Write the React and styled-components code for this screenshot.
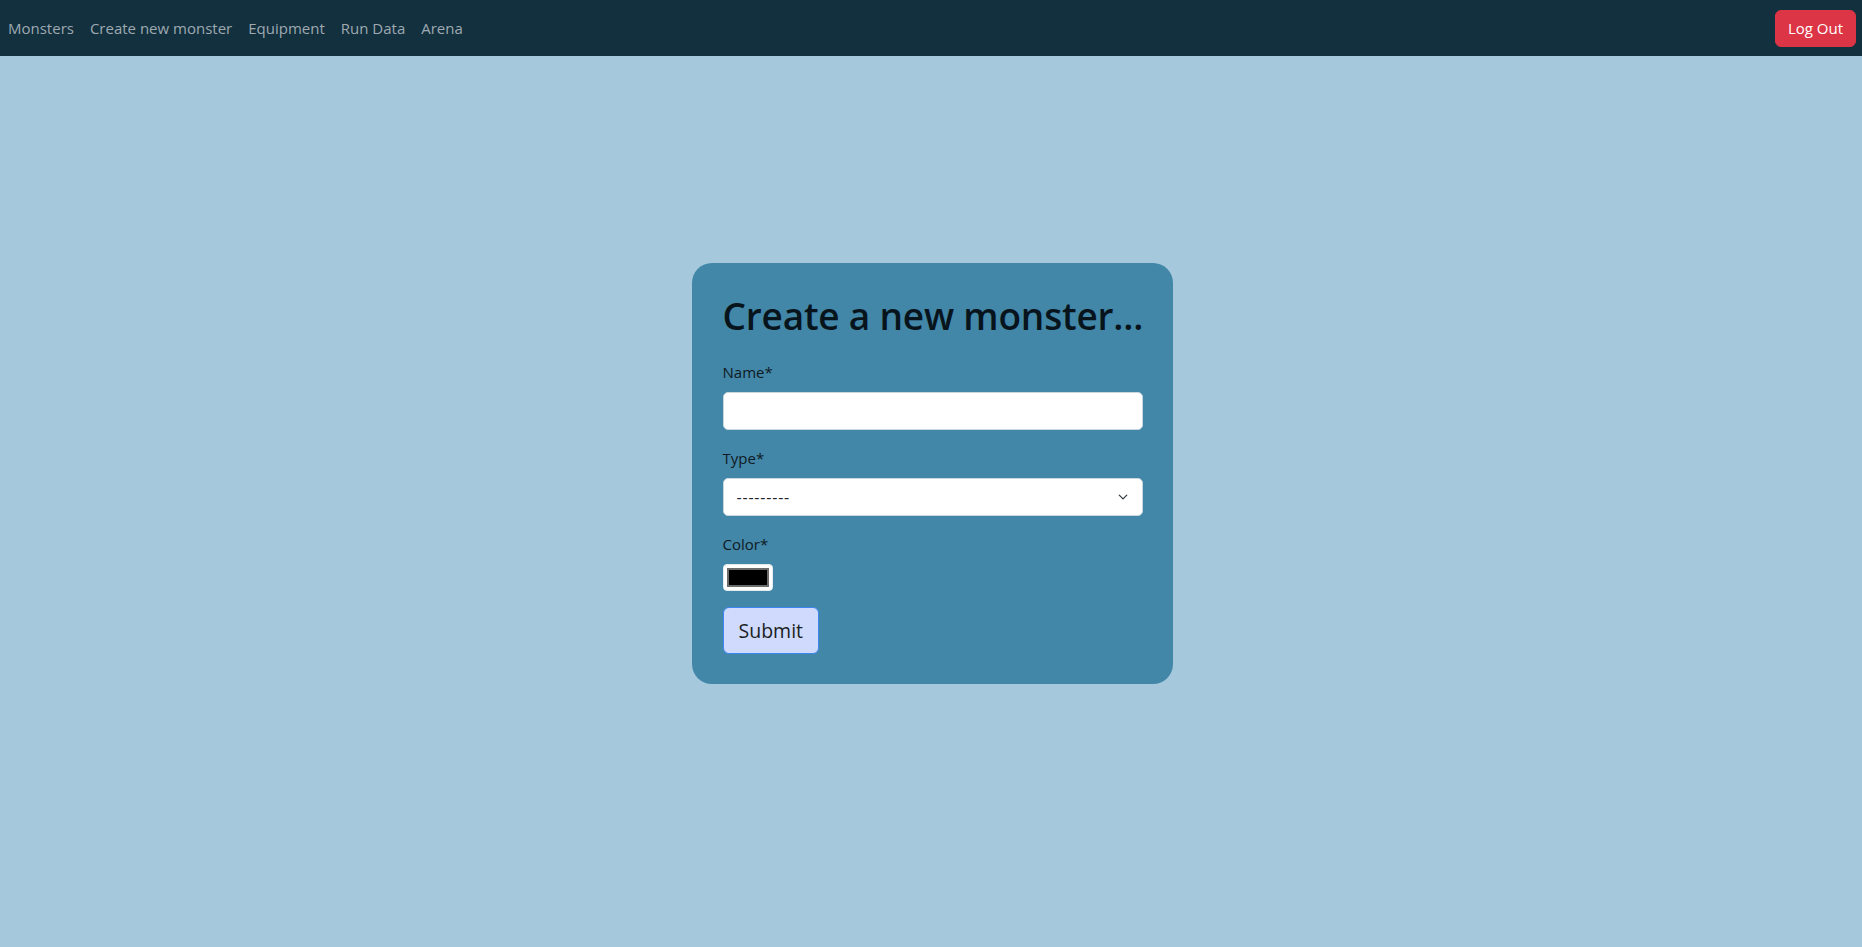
import React from "react";
import styled, { createGlobalStyle } from "styled-components";

const GlobalStyle = createGlobalStyle`
  * {
    box-sizing: border-box;
  }
  html, body {
    margin: 0;
    padding: 0;
    background-color: #a6c8dc;
    font-family: "Open Sans", "Noto Sans", sans-serif;
    color: #212529;
  }
`;

const links = ["Monsters", "Create new monster", "Equipment", "Run Data", "Arena"];

const App = () => {
  return (
    <>
      <GlobalStyle />
      <Navbar>
        <NavLinks>
          {links.map((l) => (
            <NavLink href="#" key={l}>
              {l}
            </NavLink>
          ))}
        </NavLinks>
        <LogoutButton>Log Out</LogoutButton>
      </Navbar>
      <Main>
        <Card>
          <Title>Create a new monster...</Title>
          <form onSubmit={(e) => e.preventDefault()}>
            <Field>
              <Label htmlFor="name">Name*</Label>
              <TextInput id="name" type="text" />
            </Field>
            <Field>
              <Label htmlFor="type">Type*</Label>
              <Select id="type" defaultValue="">
                <option value="">---------</option>
              </Select>
            </Field>
            <Field>
              <Label htmlFor="color">Color*</Label>
              <ColorInput id="color" type="color" defaultValue="#000000" />
            </Field>
            <SubmitButton type="submit">Submit</SubmitButton>
          </form>
        </Card>
      </Main>
    </>
  );
};

export default App;

const Navbar = styled.nav`
  height: 56px;
  background-color: #13303f;
  display: flex;
  justify-content: space-between;
  align-items: center;
  padding: 0 6px 0 0;
`;
const NavLinks = styled.div`
  display: flex;
  align-items: center;
`;
const NavLink = styled.a`
  text-decoration: none;
  color: #9ea9b0;
  font-size: 15px;
  padding: 8px 8px;
  &:hover {
    color: #d0d6da;
  }
`;
const LogoutButton = styled.button`
  font-family: inherit;
  font-size: 15px;
  color: #fff;
  background-color: #dc3545;
  border: 1px solid #dc3545;
  border-radius: 6px;
  padding: 0 12px;
  height: 37px;
  cursor: pointer;
`;

const Main = styled.main`
  height: calc(100vh - 56px);
  padding-bottom: 56px;
  overflow: hidden;
  display: flex;
  justify-content: center;
  align-items: center;
`;
const Card = styled.div`
  width: 481px;
  margin-left: 2px;
  background-color: #4286a8;
  border-radius: 20px;
  padding: 30px 30px 30px 31px;
`;
const Title = styled.h1`
  margin: 0 0 21px;
  font-size: 37px;
  font-weight: 600;
  line-height: 1.25;
  letter-spacing: -0.2px;
  color: #08141c;
  white-space: nowrap;
`;
const Field = styled.div`
  margin-bottom: 16px;
`;
const Label = styled.label`
  display: block;
  font-size: 15px;
  line-height: 24px;
  margin-bottom: 8px;
  color: #0f1a22;
`;
const TextInput = styled.input`
  display: block;
  width: 100%;
  height: 38px;
  font-family: inherit;
  font-size: 16px;
  padding: 6px 12px;
  border: 1px solid #c9d6de;
  border-radius: 5px;
  background: #fff;
  outline: none;
`;
const Select = styled.select`
  display: block;
  width: 100%;
  height: 38px;
  font-family: inherit;
  font-size: 16px;
  letter-spacing: 0.8px;
  color: #212529;
  padding: 6px 36px 6px 13px;
  border: 1px solid #c9d6de;
  border-radius: 5px;
  appearance: none;
  background: #fff
    url("data:image/svg+xml,%3csvg xmlns='http://www.w3.org/2000/svg' viewBox='0 0 16 16'%3e%3cpath fill='none' stroke='%23343a40' stroke-linecap='round' stroke-linejoin='round' stroke-width='2' d='m2 5 6 6 6-6'/%3e%3c/svg%3e")
    no-repeat right 12px center / 14px 10px;
  outline: none;
`;
const ColorInput = styled.input`
  display: block;
  width: 50px;
  height: 27px;
  padding: 3px;
  border: 1px solid #e4ebef;
  border-radius: 4px;
  background: #fff;
  cursor: pointer;
  &::-webkit-color-swatch-wrapper {
    padding: 0;
  }
  &::-webkit-color-swatch {
    border: 2px solid #6b6b6b;
    border-radius: 0;
  }
`;
const SubmitButton = styled.button`
  font-family: inherit;
  font-size: 19.5px;
  color: #1b1f24;
  background-color: #cfdafd;
  border: 1px solid #3d86f2;
  border-radius: 6px;
  height: 47px;
  padding: 0 15px;
  cursor: pointer;
`;
